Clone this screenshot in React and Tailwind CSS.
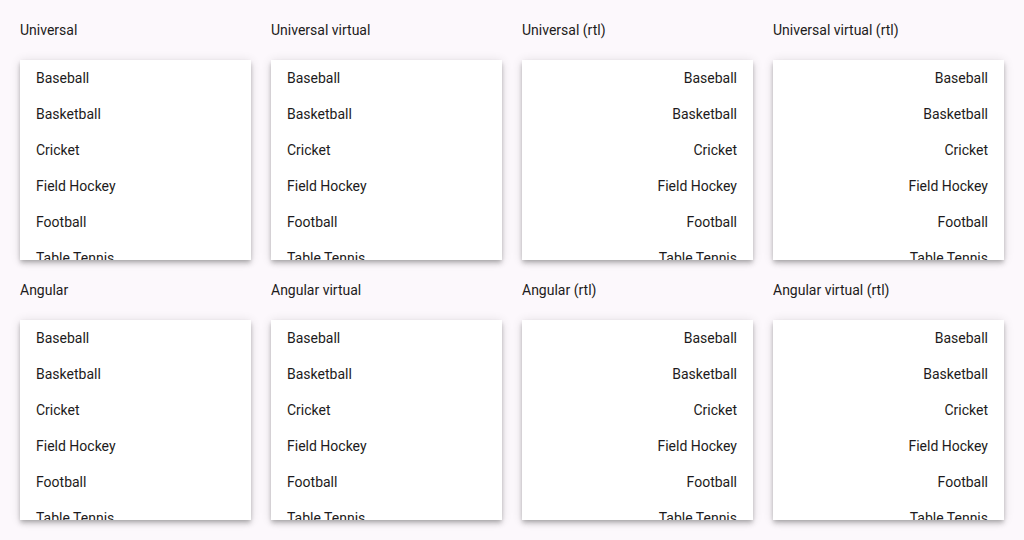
import React from "react";

const sports = [
  "Baseball",
  "Basketball",
  "Cricket",
  "Field Hockey",
  "Football",
  "Table Tennis",
  "Tennis",
  "Volleyball",
];

const panels = [
  { title: "Universal", rtl: false },
  { title: "Universal virtual", rtl: false },
  { title: "Universal (rtl)", rtl: true },
  { title: "Universal virtual (rtl)", rtl: true },
  { title: "Angular", rtl: false },
  { title: "Angular virtual", rtl: false },
  { title: "Angular (rtl)", rtl: true },
  { title: "Angular virtual (rtl)", rtl: true },
];

const ListPanel = ({ title, rtl }) => {
  return (
    <div className="flex flex-col">
      <div className="h-5 leading-5 text-sm text-[#1d1b20]">{title}</div>
      <div
        dir={rtl ? "rtl" : "ltr"}
        className="mt-5 h-[200px] overflow-hidden bg-white shadow-[0_2px_4px_-1px_rgba(0,0,0,0.2),0_4px_5px_0_rgba(0,0,0,0.14),0_1px_10px_0_rgba(0,0,0,0.12)]"
      >
        {sports.map((sport) => (
          <div
            key={sport}
            className="h-9 px-4 flex items-center text-sm text-[#1d1b20]"
          >
            {sport}
          </div>
        ))}
      </div>
    </div>
  );
};

export default function App() {
  return (
    <div
      className="min-h-screen bg-[#fcf8fc] p-5"
      style={{ fontFamily: "Roboto, 'Noto Sans', sans-serif" }}
    >
      <div className="grid grid-cols-4 gap-x-5 gap-y-5">
        {panels.map((p) => (
          <ListPanel key={p.title} title={p.title} rtl={p.rtl} />
        ))}
      </div>
    </div>
  );
}
